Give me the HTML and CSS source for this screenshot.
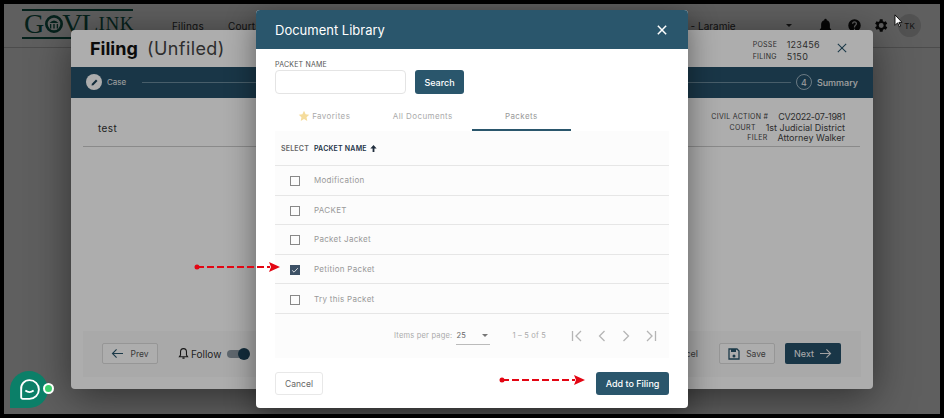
FILE: index.html
```html
<!DOCTYPE html>
<html lang="en">

<head>
  <meta charset="UTF-8">
  <title>Document Library</title>
  <link rel="stylesheet" href="styles.css">
</head>

<body>
  <div class="screen">

    <header class="topBar">
      <div class="logo">
        <span class="logoBig">G</span>
        <svg class="logoDome" viewBox="0 0 20 20" width="18" height="18">
          <circle cx="10" cy="10" r="8.500" fill="none" stroke="#0f5c4c" stroke-width="3"/>
          <path d="M5 9 Q10 3 15 9 Z M5.500 10h1.500v5h-1.500z M9.200 10h1.600v5h-1.600z M13 10h1.500v5h-1.500z" fill="#0f5c4c"/>
        </svg>
        <span class="logoBig logoTight">V</span>
        <span class="logoBig logoTight">L</span>
        <span class="logoSmall">INK</span>
      </div>
      <nav class="topNav">
        <a>Filings</a>
        <a>Courts</a>
      </nav>
      <div class="countySelect">
        <span>1st Judicial - Laramie</span>
        <i class="caret"></i>
      </div>
      <div class="topIcons">
        <svg class="bellIcon" viewBox="0 0 24 24" width="15" height="15"><path d="M12 22a2.500 2.500 0 0 0 2.500-2.500h-5A2.500 2.500 0 0 0 12 22zm7-6v-5.500c0-3.300-1.800-6-5-6.800V3a2 2 0 0 0-4 0v.700c-3.200.800-5 3.500-5 6.800V16l-2 2v1h18v-1z" fill="#111"/></svg>
        <svg viewBox="0 0 24 24" width="15" height="15"><path d="M12 2a10 10 0 1 0 0 20 10 10 0 0 0 0-20zm1 17h-2v-2h2zm2.100-7.700-.9.900c-.7.700-1.200 1.300-1.200 2.800h-2v-.500c0-1.100.5-2.100 1.200-2.800l1.200-1.300c.4-.3.600-.8.600-1.400a2 2 0 0 0-4 0H8a4 4 0 0 1 8 0c0 .900-.4 1.700-.9 2.300z" fill="#111"/></svg>
        <svg viewBox="0 0 24 24" width="17" height="17"><path d="M19.400 13a7.500 7.500 0 0 0 0-2l2.100-1.600-2-3.500-2.500 1a7.500 7.500 0 0 0-1.700-1L15 3.300h-4l-.4 2.600a7.500 7.500 0 0 0-1.700 1l-2.500-1-2 3.500L6.500 11a7.500 7.500 0 0 0 0 2l-2.100 1.600 2 3.500 2.500-1c.5.400 1.100.700 1.700 1l.4 2.600h4l.4-2.600c.6-.3 1.200-.6 1.700-1l2.500 1 2-3.500zM13 15.500a3.500 3.500 0 1 1 0-7 3.500 3.500 0 0 1 0 7z" fill="#111"/></svg>
        <span class="avatar">TK</span>
      </div>
    </header>

    <div class="backdrop">
      <section class="filing">
        <div class="filingHead">
          <h1>Filing <span>(Unfiled)</span></h1>
          <dl class="filingIds">
            <dt>POSSE</dt><dd>123456</dd>
            <dt>FILING</dt><dd>5150</dd>
          </dl>
          <svg class="filingClose" viewBox="0 0 12 12" width="10" height="10"><path d="M1 1l10 10M11 1L1 11" stroke="#2a566c" stroke-width="1.300" fill="none"/></svg>
        </div>

        <div class="stepper">
          <span class="stepIcon">
            <svg viewBox="0 0 12 12" width="9" height="9"><path d="M2 10l.5-2.500L8 2l2 2-5.500 5.500z" fill="#1d4257"/></svg>
          </span>
          <span class="stepLabel">Case</span>
          <span class="stepLine"></span>
          <span class="stepNum">4</span>
          <span class="stepLabel stepStrong">Summary</span>
        </div>

        <div class="caseRow">
          <span class="caseName">test</span>
          <dl class="caseInfo">
            <div><dt>CIVIL ACTION #</dt><dd>CV2022-07-1981</dd></div>
            <div><dt>COURT</dt><dd>1st Judicial District</dd></div>
            <div><dt>FILER</dt><dd>Attorney Walker</dd></div>
          </dl>
        </div>

        <div class="filingFoot">
          <button class="ghostBtn">
            <svg viewBox="0 0 14 12" width="13" height="11"><path d="M13 6H1.500M6 1.500L1.500 6 6 10.500" stroke="#2a566c" stroke-width="1.200" fill="none"/></svg>
            Prev
          </button>
          <span class="follow">
            <svg viewBox="0 0 24 24" width="13" height="13"><path d="M12 3c-3.500 0-5.500 2.500-5.500 6v6L4.500 18h15l-2-3V9c0-3.500-2-6-5.500-6zM10 20.500h4" stroke="#222" stroke-width="2" fill="none"/></svg>
            Follow
          </span>
          <span class="toggle"><i></i></span>
          <span class="footGap"></span>
          <span class="cancelText">Cancel</span>
          <button class="ghostBtn saveBtn">
            <svg viewBox="0 0 12 12" width="12" height="12"><path d="M1 1h8l2 2v8H1z" fill="none" stroke="#2a566c" stroke-width="1.300"/><path d="M3 1h5v3H3z" fill="#2a566c"/><circle cx="6" cy="8" r="1.500" fill="#2a566c"/></svg>
            Save
          </button>
          <button class="nextBtn">
            Next
            <svg viewBox="0 0 14 12" width="13" height="11"><path d="M1 6h11.500M8 1.500L12.500 6 8 10.500" stroke="#eee" stroke-width="1.200" fill="none"/></svg>
          </button>
        </div>
      </section>
    </div>

    <div class="backdrop backdropTop">
      <section class="modal">
        <div class="modalHead">
          <h2>Document Library</h2>
          <svg viewBox="0 0 12 12" width="10" height="10"><path d="M1 1l10 10M11 1L1 11" stroke="#fff" stroke-width="1.800" fill="none"/></svg>
        </div>

        <div class="modalBody">
          <label class="fieldLabel" for="packetName">PACKET NAME</label>
          <div class="searchRow">
            <input type="text" id="packetName">
            <button class="primaryBtn">Search</button>
          </div>

          <div class="tabs">
            <span class="tab">
              <svg viewBox="0 0 24 24" width="12" height="12"><path d="M12 1.500l3.200 6.900 7.300.900-5.400 5.100 1.400 7.500-6.500-3.700-6.500 3.700 1.400-7.500-5.400-5.100 7.300-.900z" fill="#f5dc9c"/></svg>
              Favorites
            </span>
            <span class="tab">All Documents</span>
            <span class="tab tabActive">Packets</span>
          </div>

          <div class="packetTable">
            <div class="headRow">
              <span class="selectHead">SELECT</span>
              <span class="nameHead">PACKET NAME</span>
              <svg viewBox="0 0 10 10" width="9" height="9"><path d="M5 1L1.500 5H4v4h2V5h2.500z" fill="#222f3e"/></svg>
            </div>
            <div class="row"><span class="check"></span>Modification</div>
            <div class="row"><span class="check"></span>PACKET</div>
            <div class="row"><span class="check"></span>Packet Jacket</div>
            <div class="row"><span class="check checked"><svg viewBox="0 0 10 10" width="8" height="8"><path d="M1.500 5.500l2.300 2.200 4.700-5" stroke="#fff" stroke-width="1" fill="none"/></svg></span>Petition Packet</div>
            <div class="row"><span class="check"></span>Try this Packet</div>

            <div class="paginator">
              <span>Items per page:</span>
              <span class="pageSize">25<i class="caret"></i></span>
              <span class="pageRange">1 – 5 of 5</span>
              <div class="pageIcons">
                <svg viewBox="0 0 14 14" width="14" height="14"><path d="M2.500 2v10M11 2L6 7l5 5" stroke="#b5b5b5" stroke-width="1.300" fill="none"/></svg>
                <svg viewBox="0 0 14 14" width="14" height="14"><path d="M9.500 2l-5 5 5 5" stroke="#b5b5b5" stroke-width="1.300" fill="none"/></svg>
                <svg viewBox="0 0 14 14" width="14" height="14"><path d="M4.500 2l5 5-5 5" stroke="#b5b5b5" stroke-width="1.300" fill="none"/></svg>
                <svg viewBox="0 0 14 14" width="14" height="14"><path d="M11.500 2v10M3 2l5 5-5 5" stroke="#b5b5b5" stroke-width="1.300" fill="none"/></svg>
              </div>
            </div>
          </div>

          <div class="modalFoot">
            <button class="plainBtn">Cancel</button>
            <button class="primaryBtn addBtn">Add to Filing</button>
          </div>
        </div>
      </section>
    </div>

    <div class="chatBubble">
      <svg viewBox="0 0 24 24" width="25" height="25"><path d="M12 3a9 9 0 1 1 0 18H5.500a1.500 1.500 0 0 1-1.500-1.500V12a8 8 0 0 1 8-9z" fill="none" stroke="#fff" stroke-width="1.800"/><path d="M8 13q4 3 8 0" fill="none" stroke="#fff" stroke-width="1.800"/></svg>
      <i class="chatDot"></i>
    </div>

    <!-- red annotation arrows drawn on the screenshot -->
    <svg class="callout calloutOne" viewBox="0 0 87 12" width="87" height="12">
      <circle cx="3" cy="6" r="2.500" fill="#e30613"/>
      <path d="M3 6h73" stroke="#e30613" stroke-width="2" stroke-dasharray="7 3"/>
      <path d="M86 6l-11 5 2-5-2-5z" fill="#e30613"/>
    </svg>
    <svg class="callout calloutTwo" viewBox="0 0 87 12" width="87" height="12">
      <circle cx="3" cy="6" r="2.500" fill="#e30613"/>
      <path d="M3 6h73" stroke="#e30613" stroke-width="2" stroke-dasharray="7 3"/>
      <path d="M86 6l-11 5 2-5-2-5z" fill="#e30613"/>
    </svg>

    <!-- mouse pointer -->
    <svg class="pointer" viewBox="0 0 10 16" width="9" height="14"><path d="M1 1v12l3-3 2 4.500 1.500-.7-2-4.300H9z" fill="#fff" stroke="#000" stroke-width="1"/></svg>
  </div>
</body>

</html>
```

FILE: styles.css
```css
* {
  box-sizing: border-box;
}

body {
  margin: 0;
  font-family: Inter, "Open Sans", sans-serif;
  overflow: hidden;
}

dl,
dd,
h1,
h2 {
  margin: 0;
}

button {
  font-family: inherit;
}

.screen {
  position: relative;
  width: 944px;
  height: 418px;
  border: 4px solid #000;
  background: #fff;
  overflow: hidden;
}

/* top bar behind the dialogs */

.topBar {
  display: flex;
  align-items: center;
  height: 44px;
  padding: 0 19px 0 18px;
  border-bottom: 1px solid #ccc;
}

.logo {
  display: flex;
  flex-shrink: 0;
  align-items: center;
  width: 111px;
  height: 30px;
  margin-top: -4px;
  padding-left: 2px;
  border-top: 2px solid #0f5c4c;
  border-bottom: 2px solid #0f5c4c;
  font-family: "Liberation Serif", serif;
  color: #0f5c4c;
  line-height: 1;
}

.logoBig {
  font-size: 28px;
}

.logoTight {
  margin-left: -1px;
}

.logoSmall {
  font-size: 19px;
  letter-spacing: .5px;
}

.logoDome {
  flex-shrink: 0;
  margin-left: 1px;
}

.topNav {
  display: flex;
  gap: 24px;
  margin-left: 39px;
  font-size: 10px;
  color: #333;
  letter-spacing: .2px;
}

.countySelect {
  display: flex;
  align-items: center;
  justify-content: space-between;
  width: 300px;
  height: 26px;
  margin-left: auto;
  padding: 0 10px 0 134px;
  font-size: 10px;
  color: #333;
  white-space: nowrap;
}

.caret {
  display: inline-block;
  border-left: 3px solid transparent;
  border-right: 3px solid transparent;
  border-top: 3px solid #333;
}

.topIcons {
  display: flex;
  align-items: center;
  gap: 10px;
  margin-left: 16px;
}

.bellIcon {
  margin-right: 4px;
}

.avatar {
  display: flex;
  align-items: center;
  justify-content: center;
  width: 23px;
  height: 23px;
  margin-left: -1px;
  border-radius: 50%;
  background: #ddd;
  font-size: 8px;
  color: #333;
}

/* dialogs */

.backdrop {
  position: absolute;
  inset: 0;
  display: flex;
  align-items: center;
  justify-content: center;
  background: rgba(0, 0, 0, .45);
}

.backdropTop {
  background: rgba(0, 0, 0, .32);
}

.filing {
  display: flex;
  flex-direction: column;
  width: 802px;
  height: 359px;
  border-radius: 4px;
  background: #fff;
  box-shadow: 0 8px 40px rgba(0, 0, 0, .5);
}

.filingHead {
  display: flex;
  align-items: center;
  height: 37px;
  padding: 0 26px 0 19px;
}

.filingHead h1 {
  margin-right: auto;
  font-size: 18px;
  font-weight: 700;
  color: #111;
}

.filingHead h1 span {
  margin-left: 5px;
  font-weight: 400;
  color: #444;
  letter-spacing: .4px;
}

.filingIds {
  display: grid;
  grid-template-columns: 34px auto;
  align-items: center;
  row-gap: 1px;
  padding-top: 4px;
  font-size: 9px;
  color: #444;
  letter-spacing: .3px;
}

.filingIds dt {
  font-size: 7px;
}

.filingClose {
  margin-left: 17px;
}

.stepper {
  display: flex;
  align-items: center;
  height: 31px;
  padding: 0 15px;
  background: #265069;
  color: #eee;
}

.stepIcon {
  display: flex;
  align-items: center;
  justify-content: center;
  width: 16px;
  height: 16px;
  border-radius: 50%;
  background: #fff;
}

.stepLabel {
  margin-left: 5px;
  font-size: 8px;
}

.stepStrong {
  font-size: 9px;
  font-weight: 500;
}

.stepLine {
  flex: 1;
  height: 1px;
  margin: 0 5px 0 16px;
  background: #6b8b9d;
}

.stepNum {
  display: flex;
  align-items: center;
  justify-content: center;
  width: 16px;
  height: 16px;
  border: 1px solid #9db4c1;
  border-radius: 50%;
  font-size: 9px;
}

.caseRow {
  display: flex;
  align-items: center;
  justify-content: space-between;
  height: 49px;
  margin: 0 13px 0 12px;
  padding: 13px 15px 0;
  border-bottom: 1px solid #ccc;
}

.caseName {
  font-size: 10px;
  letter-spacing: .4px;
  color: #333;
}

.caseInfo div {
  display: flex;
  justify-content: flex-end;
  gap: 10px;
  font-size: 9px;
  line-height: 10.500px;
  color: #444;
}

.caseInfo div:first-child dd {
  letter-spacing: -.4px;
}

.caseInfo dt {
  font-size: 7px;
  letter-spacing: .3px;
}

.filingFoot {
  display: flex;
  align-items: center;
  height: 46px;
  margin: auto 12px 12px;
  padding: 0 20px 0 19px;
  background: #fafafa;
}

.ghostBtn {
  display: flex;
  align-items: center;
  gap: 6px;
  height: 21px;
  width: 56px;
  justify-content: center;
  border: 1px solid #ddd;
  border-radius: 2px;
  background: #fff;
  font-size: 8.500px;
  color: #555;
}

.follow {
  display: flex;
  align-items: center;
  gap: 1px;
  margin-left: 19px;
  font-size: 10px;
  color: #333;
}

.toggle {
  position: relative;
  width: 20px;
  height: 8px;
  margin-left: 6px;
  border-radius: 4px;
  background: #8c98a2;
}

.toggle i {
  position: absolute;
  right: -3px;
  top: -2px;
  width: 12px;
  height: 12px;
  border-radius: 50%;
  background: #1d4257;
}

.footGap {
  flex: 1;
}

.cancelText {
  font-size: 9px;
  color: #555;
}

.saveBtn {
  margin-left: 21px;
}

.nextBtn {
  display: flex;
  align-items: center;
  justify-content: center;
  gap: 5px;
  width: 56px;
  height: 21px;
  margin-left: 10px;
  border: 0;
  border-radius: 2px;
  background: #265069;
  font-size: 9px;
  color: #fff;
}

.modal {
  display: flex;
  flex-direction: column;
  width: 432px;
  height: 398px;
  border-radius: 4px;
  background: #fff;
  box-shadow: 0 8px 30px rgba(0, 0, 0, .45);
}

.modalHead {
  display: flex;
  align-items: center;
  justify-content: space-between;
  height: 39px;
  padding: 0 21px 0 19px;
  border-radius: 4px 4px 0 0;
  background: #2a566c;
}

.modalHead h2 {
  font-size: 13px;
  font-weight: 400;
  color: #fff;
}

.modalBody {
  display: flex;
  flex-direction: column;
  flex: 1;
  padding: 10px 19px 13px;
}

.fieldLabel {
  font-size: 7px;
  line-height: 11px;
  color: #555;
  letter-spacing: .2px;
}

.searchRow {
  display: flex;
  gap: 9px;
}

.searchRow input {
  width: 131px;
  height: 24px;
  border: 1px solid #e4e4e4;
  border-radius: 4px;
}

.primaryBtn {
  height: 24px;
  border: 0;
  border-radius: 3px;
  background: #2a566c;
  font-size: 9px;
  font-weight: 500;
  color: #fff;
}

.searchRow .primaryBtn {
  width: 49px;
}

.tabs {
  display: grid;
  grid-template-columns: repeat(3, 98.500px);
  height: 37px;
}

.tab {
  display: flex;
  align-items: center;
  justify-content: center;
  gap: 2px;
  padding-top: 7px;
  font-size: 8px;
  color: #aaa;
  letter-spacing: .4px;
}

.tabActive {
  padding-top: 9px;
  border-bottom: 2px solid #2a566c;
  color: #999;
}

.packetTable {
  background: #fcfcfc;
}

.headRow {
  display: flex;
  align-items: center;
  height: 35px;
  padding: 0 6px;
  border-bottom: 1px solid #e6e6e6;
  font-size: 7px;
  font-weight: 600;
  letter-spacing: .2px;
}

.selectHead {
  color: #666;
}

.nameHead {
  margin: 0 2px 0 5px;
  color: #1e3448;
}

.row {
  display: flex;
  align-items: center;
  height: 29.600px;
  padding-left: 15px;
  border-bottom: 1px solid #e6e6e6;
  font-size: 8px;
  color: #999;
  letter-spacing: .3px;
}

.check {
  display: flex;
  align-items: center;
  justify-content: center;
  width: 10px;
  height: 10px;
  margin: 2px 14px 0 0;
  border: 1px solid #888;
}

.checked {
  border: 0;
  background: #3d5166;
}

.paginator {
  display: flex;
  align-items: center;
  height: 44px;
  padding-left: 119px;
  font-size: 7.500px;
  color: #aaa;
  letter-spacing: .2px;
}

.pageSize {
  display: flex;
  align-items: center;
  justify-content: space-between;
  width: 34px;
  height: 18px;
  margin-left: 4px;
  padding: 0 2px 0 0;
  border-bottom: 1px solid #bbb;
  color: #666;
}

.pageSize .caret {
  border-top-color: #777;
}

.pageRange {
  margin-left: 22px;
}

.pageIcons {
  display: flex;
  gap: 10.500px;
  margin-left: 24px;
}

.modalFoot {
  display: flex;
  justify-content: space-between;
  margin-top: auto;
}

.plainBtn {
  width: 48px;
  height: 23px;
  border: 1px solid #e8e8e8;
  border-radius: 3px;
  background: #fff;
  font-size: 8.500px;
  color: #666;
}

.addBtn {
  width: 73px;
  height: 23px;
}

/* things lying over the page */

.chatBubble {
  position: absolute;
  left: 6px;
  top: 367px;
  display: flex;
  align-items: center;
  justify-content: center;
  width: 38px;
  height: 37px;
  border-radius: 50% 50% 50% 0;
  background: #0b7f68;
}

.chatDot {
  position: absolute;
  right: -6px;
  top: 12px;
  width: 11px;
  height: 11px;
  border: 2.500px solid #fff;
  border-radius: 50%;
  background: #3ecf6e;
}

.callout {
  position: absolute;
}

.calloutOne {
  left: 190px;
  top: 257px;
}

.calloutTwo {
  left: 495px;
  top: 370px;
}

.pointer {
  position: absolute;
  left: 890px;
  top: 10px;
}
```
